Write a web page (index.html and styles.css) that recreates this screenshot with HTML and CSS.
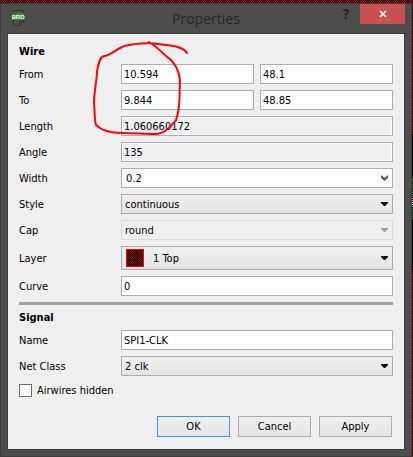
FILE: index.html
```html
<!DOCTYPE html>
<html lang="en">
<head>
<meta charset="utf-8">
<title>Properties</title>
<link rel="stylesheet" href="styles.css">
</head>
<body>
<main class="window">
  <header class="titlebar">
    <svg class="app-icon" width="13" height="17" viewBox="0 0 13 17" aria-hidden="true">
      <path d="M3 .5h7q1.500 0 1.500 1.500v9.500l-4 4H3q-1.500 0-1.500-1.500V2Q1.500.5 3 .5z" fill="#505050" stroke="#303030"/>
      <path d="M11.500 11.500h-4v4" fill="none" stroke="#303030"/>
      <rect x="0" y="3" width="12" height="7" fill="#2f8a33"/>
      <text class="app-text" x="6" y="9" text-anchor="middle">BRD</text>
    </svg>
    <h1 class="title">Properties</h1>
    <div class="window-buttons">
      <button class="help" type="button" aria-label="Help">?</button>
      <button class="close" type="button" aria-label="Close">
        <svg width="8" height="8" viewBox="0 0 8 8"><path d="M1 1l6 6M7 1l-6 6" stroke="#fff" stroke-width="1.700"/></svg>
      </button>
    </div>
  </header>
  <form class="content">
    <section class="group">
      <h2>Wire</h2>
      <div class="row"><label for="from-x">From</label><div class="pair"><input id="from-x" value="10.594"><input aria-label="From Y" value="48.1"></div></div>
      <div class="row"><label for="to-x">To</label><div class="pair"><input id="to-x" value="9.844"><input aria-label="To Y" value="48.85"></div></div>
      <div class="row"><label for="length">Length</label><input id="length" value="1.060660172" readonly></div>
      <div class="row"><label for="angle">Angle</label><input id="angle" value="135" readonly></div>
      <div class="row"><label for="width">Width</label><div class="combo"><input id="width" value="0.2"><svg class="arrow" width="7" height="6" viewBox="0 0 7 6"><path d="M0 0l3.500 2.500L7 0v3L3.500 6 0 3z" fill="#606060"/></svg></div></div>
      <div class="row"><label for="style">Style</label><div class="combo"><select id="style"><option>continuous</option></select><svg class="arrow" width="7" height="4" viewBox="0 0 7 4"><path d="M0 0h7v1L4 4H3L0 1z"/></svg></div></div>
      <div class="row"><label for="cap">Cap</label><div class="combo"><select id="cap" disabled><option>round</option></select><svg class="arrow" width="7" height="4" viewBox="0 0 7 4"><path d="M0 0h7v1L4 4H3L0 1z" fill="#a0a0a0"/></svg></div></div>
      <div class="row"><label for="layer">Layer</label><div class="combo layer"><select id="layer"><option>1 Top</option></select><span class="swatch"></span><svg class="arrow" width="7" height="4" viewBox="0 0 7 4"><path d="M0 0h7v1L4 4H3L0 1z"/></svg></div></div>
      <div class="row"><label for="curve">Curve</label><input id="curve" value="0"></div>
    </section>
    <hr>
    <section class="group">
      <h2>Signal</h2>
      <div class="row"><label for="name">Name</label><input id="name" value="SPI1-CLK"></div>
      <div class="row"><label for="net">Net Class</label><div class="combo"><select id="net"><option>2 clk</option></select><svg class="arrow" width="7" height="4" viewBox="0 0 7 4"><path d="M0 0h7v1L4 4H3L0 1z"/></svg></div></div>
    </section>
    <label class="check"><input type="checkbox">Airwires hidden</label>
    <div class="actions">
      <button class="default" type="button">OK</button>
      <button type="button">Cancel</button>
      <button type="button">Apply</button>
    </div>
  </form>
  <svg class="marker" width="108" height="96" viewBox="88 40 108 96" aria-hidden="true">
    <path d="M187 53C182 45 165 45 149 43C139 44 128 44 122 47C115 50 110 56 104 56C99 57 99 64 97 71C97 81 94 90 94 103C95 111 94 119 96 125C102 131 112 133 122 133C133 133 145 134 155 134C165 134 171 126 176 120C181 107 179 94 180 81C179 68 172 60 166 56C160 50 154 45 149 42" fill="none" stroke="#fa0505" stroke-width="2" stroke-linecap="round" stroke-linejoin="round"/>
  </svg>
</main>
</body>
</html>
```
FILE: styles.css
```css
* { box-sizing: border-box; }

body {
  margin: 0;
  min-height: 100vh;
  padding: 3px 1px 0 0;
  display: flex;
  background:
    repeating-conic-gradient(#000 0 25%, transparent 0 50%) 0 0 / 2px 2px,
    linear-gradient(#b00000 29%, #000 0 39%, #2f7d32 0 43%, #ffb6c1 0 45%, #2f7d32 0 48%, #000 0 59%, #b00000 0);
  font: 11px/13px "DejaVu Sans Condensed", "DejaVu Sans", sans-serif;
  color: #000;
}

h1, h2 { margin: 0; }

.window {
  position: relative;
  flex: 1;
  display: flex;
  flex-direction: column;
  padding: 0 6px 6px;
  background: #4d4d4d;
  border: 1px solid #3c3c3c;
}

.titlebar {
  display: grid;
  grid-template-columns: 1fr auto 1fr;
  height: 29px;
}

.app-icon { margin: 6px 0 0 5px; }
.app-text { font: bold 6px/6px "Liberation Sans", sans-serif; fill: #fff; }

.title {
  font: 14px/30px "Open Sans", sans-serif;
  color: #262626;
}

.window-buttons {
  display: flex;
  justify-content: flex-end;
  align-items: flex-start;
}

.help, .close {
  padding: 0;
  border: 0;
  height: 20px;
}

.help {
  width: 28px;
  background: none;
  color: #262626;
  font: bold 14px/20px "Open Sans", sans-serif;
}

.close {
  width: 45px;
  display: flex;
  align-items: center;
  justify-content: center;
  background: #c75050;
}

.content {
  flex: 1;
  padding: 11px;
  background: #efefef;
  border: 1px solid #3c3c3c;
}

.group { display: grid; gap: 6px; }
.group h2 { font-size: 11px; line-height: 13px; }

.row {
  display: grid;
  grid-template-columns: 96px 1fr;
  gap: 6px;
  align-items: center;
}

.pair { display: grid; grid-template-columns: 1fr 1fr; gap: 6px; }

.row input, .row select {
  width: 100%;
  min-width: 0;
  height: 20px;
  margin: 0;
  padding: 0 2px;
  border: 1px solid #abadb3;
  border-radius: 0;
  background: #fff;
  color: #000;
  font: inherit;
}

.row input[readonly] { background: #efefef; box-shadow: inset 0 0 0 1px #fff; }

.combo { position: relative; display: grid; }
.combo input { padding: 0 4px; }

.row select {
  appearance: none;
  padding: 0 3px;
  border-color: #acacac;
  background: linear-gradient(#f0f0f0, #e4e4e4);
}

.row select:disabled {
  border-color: #d9d9d9;
  background: #efefef;
  opacity: 1;
}

.arrow {
  position: absolute;
  right: 5px;
  top: 50%;
  transform: translateY(-50%);
}

.row .layer select { height: 24px; padding-left: 31px; }

.swatch {
  position: absolute;
  left: 5px;
  top: 3px;
  width: 18px;
  height: 18px;
  border: 1px solid #f00;
  background: repeating-conic-gradient(#000 0 25%, #900 0 50%) 0 0 / 2px 2px;
}

hr {
  height: 3px;
  margin: 6px 0;
  border: 0;
  background: #a0a0a0;
}

.check {
  display: flex;
  align-items: center;
  gap: 5px;
  margin-top: 8px;
}

.check input {
  appearance: none;
  width: 13px;
  height: 13px;
  margin: 0;
  border: 1px solid #707070;
  background: #fff;
}

.actions {
  display: flex;
  justify-content: flex-end;
  gap: 8px;
  margin: 19px 1px 0 0;
}

.actions button {
  width: 73px;
  height: 21px;
  padding: 0;
  border: 1px solid #acacac;
  background: linear-gradient(#f0f0f0, #e5e5e5);
  color: #000;
  font: inherit;
}

.actions .default { border-color: #3399ff; }

.marker {
  position: absolute;
  left: 87px;
  top: 36px;
  pointer-events: none;
}
```
